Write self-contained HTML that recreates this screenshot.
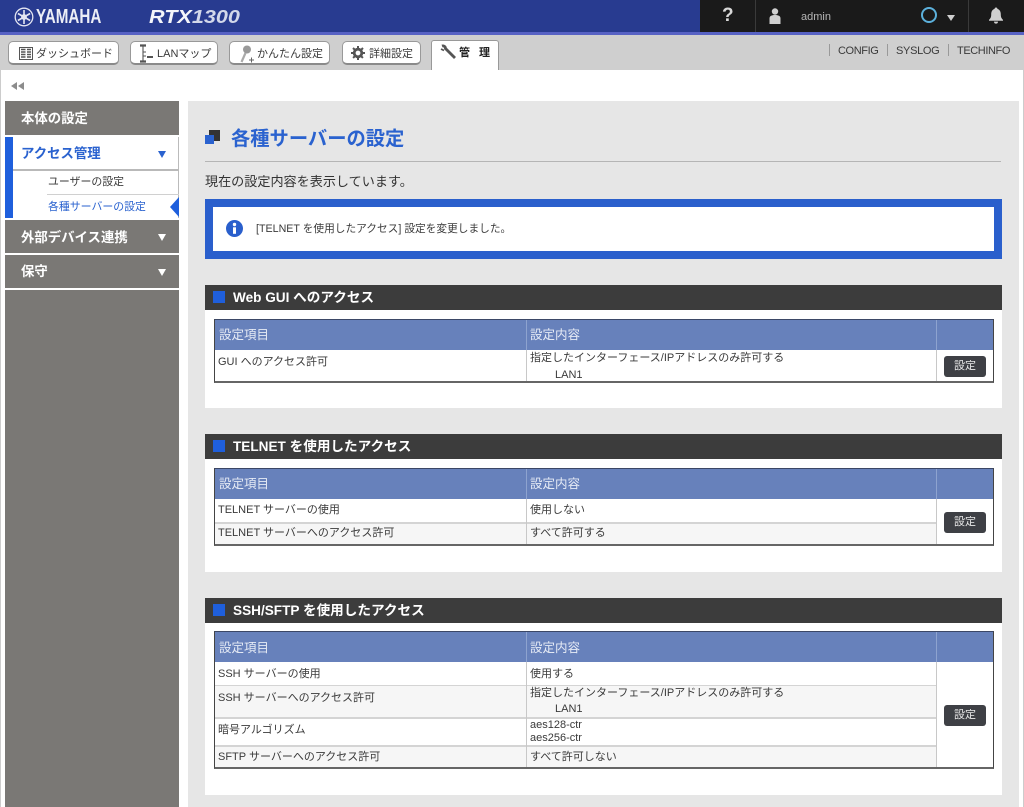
<!DOCTYPE html>
<html lang="ja"><head><meta charset="utf-8"><title>RTX1300</title>
<style>
*{box-sizing:border-box;margin:0;padding:0}
html,body{width:1024px;height:807px;overflow:hidden;background:#fff}
body{position:relative;font-family:"Liberation Sans","Noto Sans CJK JP",sans-serif;color:#333}
.a{position:absolute}
.t{position:absolute;white-space:nowrap;line-height:16px}
.btn{position:absolute;top:41px;height:24px;background:#fff;border:1px solid #999;border-bottom:2px solid #8a8a8a;border-radius:5px}
.tb{font-size:11px;color:#3a3a3a;top:46px}
.sb{position:absolute;left:5px;width:174px;background:#7a7875}
.sbt{position:absolute;left:21px;font-size:13.4px;font-weight:bold;color:#fff;white-space:nowrap;line-height:18px}
.tri{position:absolute;left:158px;width:0;height:0;border-left:4.5px solid transparent;border-right:4.5px solid transparent;border-top:7px solid #fff}
.sec{position:absolute;left:205px;width:797px;background:#fff}
.sh{position:absolute;left:0;top:0;width:797px;height:25px;background:#3c3c3c}
.sq{position:absolute;left:8px;top:6px;width:12px;height:12px;background:#1f5fdc}
.st{position:absolute;left:28px;top:4px;font-size:13.6px;font-weight:bold;color:#fff;line-height:18px;white-space:nowrap}
.tw{position:absolute;left:9px;top:34px;width:780px;border:1px solid #444;border-bottom:2px solid #666;border-top:1px solid #3b4766;background:#fff}
.h{position:absolute;left:0;top:0;width:778px;height:30px;background:#6781bb}
.ht{position:absolute;top:6px;font-size:12.5px;color:#e6ebf5;line-height:18px;white-space:nowrap}
.v{position:absolute;top:30px;bottom:0;width:1px;background:#c8c8c8}
.hv{position:absolute;top:0;height:30px;width:1px;background:#8ea3cf}
.r{position:absolute;left:0;width:722px;border-top:2px solid #d4d4d4}
.alt{background:#f6f6f6}
.c{position:absolute;font-size:11px;line-height:14px;color:#3a3a3a;white-space:nowrap}
.set{position:absolute;left:729px;width:42px;height:21px;background:#3e4045;border-radius:3px;color:#e8e8e8;font-size:11px;line-height:21px;text-align:center}
</style></head><body>

<!-- top bar -->
<div class="a" style="left:0;top:0;width:1024px;height:32px;background:#283b90"></div>
<div class="a" style="left:700px;top:0;width:324px;height:32px;background:#1a1a1a"></div>
<div class="a" style="left:0;top:32px;width:1024px;height:3px;background:#5762c4"></div>
<div class="a" style="left:0;top:35px;width:1024px;height:35px;background:#cfcfcf"></div>
<div class="a" style="left:0;top:70px;width:1px;height:737px;background:#ccc"></div>
<div class="a" style="left:1023px;top:70px;width:1px;height:737px;background:#ccc"></div>

<svg class="a" style="left:14px;top:7px" width="20" height="20" viewBox="0 0 20 20" fill="none" stroke="#e4e6f2"><circle cx="10" cy="10" r="8.8" stroke-width="1.3"/><path d="M10 3v14M3.9 6.500l12.200 7M16.100 6.500l-12.200 7" stroke-width="1.600"/><circle cx="10" cy="10" r="2.400" fill="#e4e6f2"/></svg>
<div class="t" style="left:36px;top:7px;font-size:20px;font-weight:bold;color:#eceef6;line-height:20px;transform:scaleX(.76);transform-origin:0 0">YAMAHA</div>
<div class="t" style="left:149px;top:7px;font-size:18px;font-weight:bold;font-style:italic;color:#f4f5fa;line-height:20px;transform:scaleX(1.2);transform-origin:0 0">RTX<span style="color:#d3d8ea">1300</span></div>

<div class="a" style="left:755px;top:0;width:1px;height:32px;background:#3a3a3a"></div>
<div class="a" style="left:968px;top:0;width:1px;height:32px;background:#3a3a3a"></div>
<div class="t" style="left:722px;top:6px;font-size:19px;font-weight:bold;color:#d8d8d8;line-height:20px">?</div>
<svg class="a" style="left:769px;top:8px" width="12" height="16" viewBox="0 0 12 16" fill="#cfcfcf"><circle cx="6" cy="3.500" r="3.200"/><path d="M.5 16V10.500C.5 8 2.500 7 6 7s5.500 1 5.500 3.500V16z"/></svg>
<div class="t" style="left:801px;top:9px;font-size:11px;color:#b5b5b5">admin</div>
<div class="a" style="left:921px;top:7px;width:16px;height:16px;border:2px solid #5cb1dc;border-radius:50%"></div>
<div class="a" style="left:947px;top:15px;width:0;height:0;border-left:4px solid transparent;border-right:4px solid transparent;border-top:6px solid #d0d0d0"></div>
<svg class="a" style="left:988px;top:7px" width="16" height="17" viewBox="0 0 16 17" fill="#d0d0d0"><path d="M8 .5a1.400 1.400 0 0 1 1.400 1.400C12 2.700 12.800 5 12.800 7.500c0 2.800.8 4 2.200 5.300v1H1v-1c1.400-1.300 2.200-2.500 2.200-5.300C3.200 5 4 2.700 6.600 1.900A1.400 1.400 0 0 1 8 .5z"/><path d="M6 14.600h4a2 2 0 0 1-4 0z"/></svg>

<!-- toolbar -->
<div class="btn" style="left:8px;width:111px"></div>
<div class="btn" style="left:130px;width:88px"></div>
<div class="btn" style="left:229px;width:101px"></div>
<div class="btn" style="left:342px;width:79px"></div>
<div class="a" style="left:431px;top:40px;width:68px;height:30px;background:#fff;border:1px solid #999;border-bottom:0;border-radius:3px 3px 0 0"></div>

<svg class="a" style="left:19px;top:47px" width="14" height="13" viewBox="0 0 14 13" fill="none"><rect x=".5" y=".5" width="13" height="12" stroke="#555"/><path d="M2 2.500h4.500M2 5h4.500M2 7.500h4.500M2 10h4.500M8 2.500h4M8 5h4M8 7.500h4M8 10h4" stroke="#555" stroke-width="1.400"/></svg>
<div class="t tb" style="left:36px">ダッシュボード</div>
<svg class="a" style="left:139px;top:44px" width="16" height="19" viewBox="0 0 16 19" fill="none" stroke="#555"><path d="M1 1.500h6M1 17.500h6" stroke-width="2.200"/><path d="M4 2v15M4 8h3M4 12h3" stroke-width="1.100"/><path d="M8 13h6" stroke-width="2"/></svg>
<div class="t tb" style="left:157px">LANマップ</div>
<svg class="a" style="left:238px;top:44px" width="18" height="20" viewBox="0 0 18 20" fill="none"><circle cx="9" cy="5.500" r="4" fill="#999"/><path d="M7.500 9L3.500 18" stroke="#aaa" stroke-width="2.200"/><path d="M13.500 13.500v5M11 16h5" stroke="#666"/></svg>
<div class="t tb" style="left:257px">かんたん設定</div>
<svg class="a" style="left:351px;top:46px" width="14" height="14" viewBox="0 0 14 14"><circle cx="7" cy="7" r="3.800" fill="none" stroke="#555" stroke-width="2.800"/><path d="M7 0v14M0 7h14M2 2l10 10M12 2L2 12" stroke="#555" stroke-width="2" stroke-dasharray="2.500 9"/></svg>
<div class="t tb" style="left:369px">詳細設定</div>
<svg class="a" style="left:440px;top:44px" width="16" height="17" viewBox="0 0 16 17" fill="none" stroke="#555"><path d="M2 2c1.500-.5 3.500.5 3.500 2.500L15 14" stroke-width="2.800"/><path d="M1 5l3 1.500" stroke-width="1.800"/></svg>
<div class="t" style="left:459px;top:45px;font-size:11px;font-weight:bold;color:#222;letter-spacing:9px">管理</div>

<div class="a" style="left:829px;top:44px;width:1px;height:12px;background:#999"></div>
<div class="a" style="left:887px;top:44px;width:1px;height:12px;background:#999"></div>
<div class="a" style="left:948px;top:44px;width:1px;height:12px;background:#999"></div>
<div class="t" style="left:838px;top:43px;font-size:11px;color:#3a3a3a;letter-spacing:-.4px">CONFIG</div>
<div class="t" style="left:896px;top:43px;font-size:11px;color:#3a3a3a;letter-spacing:-.3px">SYSLOG</div>
<div class="t" style="left:957px;top:43px;font-size:11px;color:#3a3a3a;letter-spacing:-.4px">TECHINFO</div>

<svg class="a" style="left:11px;top:82px" width="13" height="8" viewBox="0 0 13 8" fill="#8c8c8c"><path d="M6 0v8L0 4zM13 0v8L7 4z"/></svg>

<!-- sidebar -->
<div class="sb" style="top:101px;height:34px"></div>
<div class="sbt" style="top:110px">本体の設定</div>
<div class="a" style="left:5px;top:137px;width:174px;height:81px;background:#fff;border-right:1px solid #bbb"></div>
<div class="a" style="left:5px;top:137px;width:8px;height:81px;background:#1f5fdc"></div>
<div class="a" style="left:13px;top:169px;width:166px;height:2px;background:#b9b9b9"></div>
<div class="sbt" style="top:145px;color:#2a62cf">アクセス管理</div>
<div class="tri" style="top:151px;border-top-color:#2a62cf"></div>
<div class="t" style="left:48px;top:174px;font-size:10.900px;color:#3a3a3a">ユーザーの設定</div>
<div class="a" style="left:47px;top:194px;width:132px;height:1px;background:#d0d0d0"></div>
<div class="t" style="left:48px;top:199px;font-size:10.900px;color:#2a62cf">各種サーバーの設定</div>
<div class="a" style="left:170px;top:197px;width:0;height:0;border-top:10px solid transparent;border-bottom:10px solid transparent;border-right:9px solid #1f5fdc"></div>
<div class="sb" style="top:220px;height:33px"></div>
<div class="sbt" style="top:229px">外部デバイス連携</div>
<div class="tri" style="top:234px"></div>
<div class="sb" style="top:255px;height:33px"></div>
<div class="sbt" style="top:263px">保守</div>
<div class="tri" style="top:269px"></div>
<div class="sb" style="top:290px;height:517px"></div>

<!-- main -->
<div class="a" style="left:188px;top:101px;width:831px;height:706px;background:#e6e6e6"></div>
<div class="a" style="left:209px;top:130px;width:11px;height:11px;background:#333"></div>
<div class="a" style="left:205px;top:135px;width:9px;height:9px;background:#2a62cf"></div>
<div class="t" style="left:231px;top:126px;font-size:19.300px;font-weight:bold;color:#2a62cf;line-height:24px;margin-top:2px">各種サーバーの設定</div>
<div class="a" style="left:205px;top:161px;width:796px;height:1px;background:#b5b5b5"></div>
<div class="t" style="left:205px;top:174px;font-size:13.100px;color:#333">現在の設定内容を表示しています。</div>
<div class="a" style="left:205px;top:199px;width:797px;height:60px;background:#fff;border:8px solid #2a5fcc"></div>
<svg class="a" style="left:226px;top:220px" width="17" height="17" viewBox="0 0 17 17"><circle cx="8.500" cy="8.500" r="8.500" fill="#2a5fcc"/><circle cx="8.500" cy="4.500" r="1.700" fill="#fff"/><rect x="7" y="7.300" width="3" height="6.500" fill="#fff"/></svg>
<div class="t" style="left:256px;top:221px;font-size:10.700px;color:#3a3a3a">[TELNET を使用したアクセス] 設定を変更しました。</div>

<!-- Section 1 -->
<div class="sec" style="top:285px;height:123px">
 <div class="sh"><div class="sq"></div><div class="st">Web GUI へのアクセス</div></div>
 <div class="tw" style="height:64px">
  <div class="h"></div><div class="ht" style="left:4px">設定項目</div><div class="ht" style="left:315px">設定内容</div>
  <div class="hv" style="left:311px"></div><div class="hv" style="left:721px"></div>
  <div class="v" style="left:311px"></div><div class="v" style="left:721px"></div>
  <div class="c" style="left:3px;top:35px">GUI へのアクセス許可</div>
  <div class="c" style="left:315px;top:31px">指定したインターフェース/IPアドレスのみ許可する</div>
  <div class="c" style="left:340px;top:48px">LAN1</div>
  <div class="set" style="top:36px">設定</div>
 </div>
</div>

<!-- Section 2 -->
<div class="sec" style="top:434px;height:138px">
 <div class="sh"><div class="sq"></div><div class="st">TELNET を使用したアクセス</div></div>
 <div class="tw" style="height:78px">
  <div class="h"></div><div class="ht" style="left:4px">設定項目</div><div class="ht" style="left:315px">設定内容</div>
  <div class="hv" style="left:311px"></div><div class="hv" style="left:721px"></div>
  <div class="r alt" style="top:53px;height:22px"></div>
  <div class="v" style="left:311px"></div><div class="v" style="left:721px"></div>
  <div class="c" style="left:3px;top:34px">TELNET サーバーの使用</div>
  <div class="c" style="left:315px;top:34px">使用しない</div>
  <div class="c" style="left:3px;top:57px">TELNET サーバーへのアクセス許可</div>
  <div class="c" style="left:315px;top:57px">すべて許可する</div>
  <div class="set" style="top:43px">設定</div>
 </div>
</div>

<!-- Section 3 -->
<div class="sec" style="top:598px;height:197px">
 <div class="sh"><div class="sq"></div><div class="st">SSH/SFTP を使用したアクセス</div></div>
 <div class="tw" style="top:33px;height:138px">
  <div class="h"></div><div class="ht" style="left:4px;top:7px">設定項目</div><div class="ht" style="left:315px;top:7px">設定内容</div>
  <div class="hv" style="left:311px"></div><div class="hv" style="left:721px"></div>
  <div class="r alt" style="top:53px;height:32px;border-top-width:1px"></div>
  <div class="r" style="top:85px;height:28px"></div>
  <div class="r alt" style="top:113px;height:22px"></div>
  <div class="v" style="left:311px"></div><div class="v" style="left:721px"></div>
  <div class="c" style="left:3px;top:35px">SSH サーバーの使用</div>
  <div class="c" style="left:315px;top:35px">使用する</div>
  <div class="c" style="left:3px;top:59px">SSH サーバーへのアクセス許可</div>
  <div class="c" style="left:315px;top:54px">指定したインターフェース/IPアドレスのみ許可する</div>
  <div class="c" style="left:340px;top:70px">LAN1</div>
  <div class="c" style="left:3px;top:91px">暗号アルゴリズム</div>
  <div class="c" style="left:315px;top:86px">aes128-ctr</div>
  <div class="c" style="left:315px;top:99px">aes256-ctr</div>
  <div class="c" style="left:3px;top:118px">SFTP サーバーへのアクセス許可</div>
  <div class="c" style="left:315px;top:118px">すべて許可しない</div>
  <div class="set" style="top:73px">設定</div>
 </div>
</div>
</body></html>
